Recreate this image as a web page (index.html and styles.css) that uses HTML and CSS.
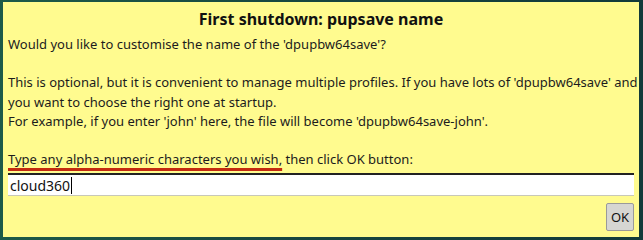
FILE: index.html
```html
<!DOCTYPE html>
<html>
<head>
<meta charset="utf-8">
<link rel="stylesheet" href="styles.css">
</head>
<body>
<div class="window">
  <div class="dialog">
    <div class="title">First shutdown: pupsave name</div>
    <div class="body">
      <p class="line">Would you like to customise the name of the 'dpupbw64save'?</p>
      <p class="line blank">&nbsp;</p>
      <p class="line">This is optional, but it is convenient to manage multiple profiles. If you have lots of 'dpupbw64save' and</p>
      <p class="line">you want to choose the right one at startup.</p>
      <p class="line">For example, if you enter 'john' here, the file will become 'dpupbw64save-john'.</p>
      <p class="line blank">&nbsp;</p>
      <p class="line"><span class="mark">Type any alpha-numeric characters you wish,</span> then click OK button:</p>
    </div>
    <div class="entry"><span class="value">cloud360</span><span class="caret"></span></div>
    <div class="actions"><button class="ok">OK</button></div>
  </div>
</div>
</body>
</html>
```
FILE: styles.css
```css
html, body {
  margin: 0;
  padding: 0;
}
body {
  width: 643px;
  height: 240px;
  overflow: hidden;
  font-family: "Noto Sans", "Open Sans", sans-serif;
}
.window {
  width: 643px;
  height: 240px;
  box-sizing: border-box;
  background: linear-gradient(90deg, #1d5a48 0%, #17453f 50%, #123a3a 100%);
  padding: 2px 4px 3px 3px;
}
.dialog {
  height: 100%;
  box-sizing: border-box;
  background: #fffb8f;
  padding: 6px 5px 0 5px;
  display: flex;
  flex-direction: column;
  color: #1c1c1c;
}
.title {
  text-align: center;
  font-weight: bold;
  font-size: 16px;
  line-height: 22px;
  color: #111;
}
.body {
  margin-top: 5px;
}
.line {
  margin: 0;
  font-size: 13px;
  line-height: 19.2px;
  white-space: nowrap;
}
.mark {
  text-decoration: underline;
  text-decoration-color: #c42a10;
  text-decoration-thickness: 3px;
  text-underline-offset: 4px;
}
.entry {
  margin-top: 4px;
  height: 23px;
  box-sizing: border-box;
  background: #fff;
  border-top: 2px solid #222;
  border-bottom: 1px solid #c8c8b8;
  display: flex;
  align-items: center;
  padding-left: 2px;
  font-size: 14px;
  color: #111;
}
.caret {
  display: inline-block;
  width: 1px;
  height: 17px;
  background: #000;
  margin-left: 1px;
}
.actions {
  display: flex;
  justify-content: flex-end;
  margin-top: 7px;
}
.ok {
  width: 28px;
  height: 28px;
  padding: 0;
  border: 1px solid #9a9a9a;
  border-radius: 2px;
  background: #d6d6d2;
  font-family: "Noto Sans", "Open Sans", sans-serif;
  font-size: 13px;
  color: #111;
}
```
